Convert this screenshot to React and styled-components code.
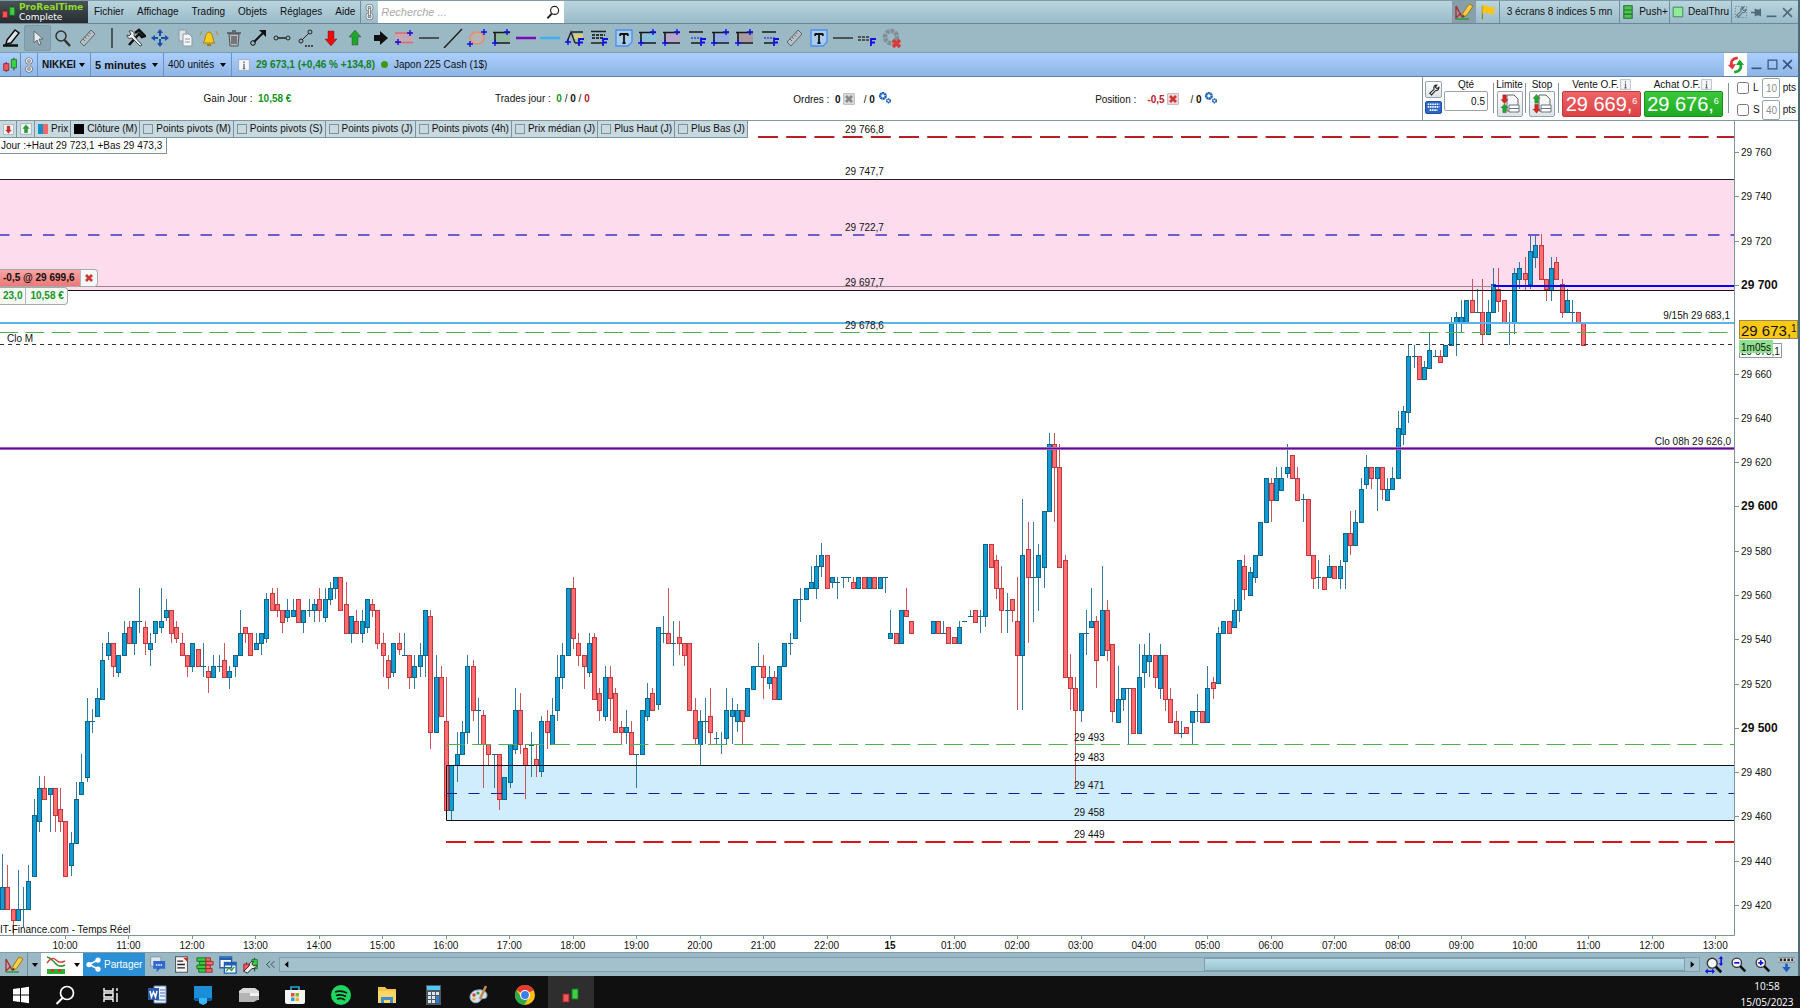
import React, { useState } from "react";
import styled, { createGlobalStyle } from "styled-components";

const GlobalStyle = createGlobalStyle`
  * { box-sizing: border-box; }
  body {
    margin: 0;
    background: #fff;
    font-family: "Liberation Sans", Arial, sans-serif;
    font-size: 10px;
    line-height: 12px;
    color: #111;
    overflow: hidden;
  }
  button, input { font: inherit; color: inherit; padding: 0; }
`;

const Window = styled.div`
  border-right: 2px solid #4d6a77;
`;

const Row = styled.div`
  display: flex;
  align-items: center;
`;

const Spacer = styled.div`
  flex: 1;
`;

const TopBar = styled(Row)`
  height: 24px;
  align-items: stretch;
  padding-right: 3px;
  border-top: 1px solid #7f9ba7;
  border-bottom: 1px solid #6d8894;
  background: linear-gradient(#b9d5df, #9bbbc9);
`;

const Brand = styled(Row)`
  width: 88px;
  gap: 2px;
  padding-left: 1px;
  background: linear-gradient(#4a5358, #262c30);
  color: #fff;
  font-family: "DejaVu Sans", sans-serif;
  font-size: 9px;
  line-height: 10px;

  strong {
    display: block;
    font-size: 9px;
    color: #8fdc2e;
  }
`;

const Menu = styled.nav`
  display: flex;
  align-items: center;
  gap: 13px;
  padding: 0 5px 0 6px;
`;

const FlatButton = styled.button`
  display: flex;
  align-items: center;
  justify-content: center;
  gap: 4px;
  border: none;
  background: ${(p) => p.$bg || "none"};
  width: ${(p) => (p.$w ? p.$w + "px" : "auto")};
  cursor: pointer;
  white-space: nowrap;
`;

const Divided = styled(FlatButton)`
  border-left: 1px solid #6f8e9b;
`;

const SearchBox = styled.label`
  display: flex;
  align-items: center;
  width: 186px;
  padding: 0 3px;
  background: #fff;

  input {
    flex: 1;
    min-width: 0;
    border: none;
    outline: none;
    font-size: 11px;
    font-style: italic;
  }
  input::placeholder { color: #aaa; }
`;

const Tools = styled.div`
  height: 29px;
  background: #9bb8c5;
  border-bottom: 1px solid #7c9dae;
`;

const ToolStrip = styled.div`
  display: flex;
  width: 904px;
  height: 28px;
`;

const Tool = styled.button`
  flex: 1;
  min-width: 0;
  display: flex;
  align-items: center;
  justify-content: center;
  border: ${(p) => (p.$active ? "1px solid #7d99a5" : "none")};
  border-radius: 2px;
  background: ${(p) => (p.$active ? "#8ba6b3" : "none")};
  margin: 1px 0;
  cursor: pointer;
`;

const TitleBar = styled(Row)`
  height: 24px;
  align-items: stretch;
  padding-right: 3px;
  background: linear-gradient(#abd0ff, #8fb5e4);
  border-bottom: 1px solid #5d83ad;
`;

const Picker = styled.button`
  display: flex;
  align-items: center;
  justify-content: space-between;
  width: ${(p) => p.$w}px;
  padding: 0 5px 0 4px;
  border: none;
  border-left: 1px solid #6f93bd;
  background: none;
  font-size: ${(p) => p.$size || 10}px;
  font-weight: ${(p) => (p.$bold ? "bold" : "normal")};
  white-space: nowrap;
`;

const Caret = styled.i`
  border: 3px solid transparent;
  border-top: 4px solid #000;
  border-bottom: 0;
`;

const Quote = styled(Row)`
  gap: 6px;
  padding-left: 6px;
  border-left: 1px solid #6f93bd;
`;

const Dot = styled.i`
  width: 7px;
  height: 7px;
  border-radius: 50%;
  background: #3f9a10;
`;

const Val = styled.b`
  color: ${(p) => p.$c || "#111"};
`;

const Account = styled(Row)`
  height: 44px;
  align-items: stretch;
  border-bottom: 1px solid #8296a0;
`;

const Stats = styled(Row)`
  flex: 1;
  justify-content: space-evenly;
`;

const Stat = styled.div`
  white-space: pre;
  svg { vertical-align: -2px; }
`;

const OrderPanel = styled(Row)`
  width: 376px;
  align-items: stretch;
  border-left: 1px solid #8296a0;
  padding-left: 2px;
`;

const Stack = styled.div`
  display: flex;
  flex-direction: column;
  align-items: center;
  width: ${(p) => p.$w}px;
  padding-top: ${(p) => p.$top || 1}px;
  gap: ${(p) => p.$gap || 0}px;
`;

const Rule = styled.i`
  width: 1px;
  height: 30px;
  margin: 6px 3px 0;
  background: #8296a0;
`;

const SquareButton = styled.button`
  display: flex;
  align-items: center;
  justify-content: center;
  width: ${(p) => p.$w}px;
  height: ${(p) => p.$h}px;
  border: 1px solid ${(p) => p.$border || "#98a4ab"};
  border-radius: 2px;
  background: ${(p) => p.$bg || "linear-gradient(#fff, #dfe3e6)"};
`;

const NumberInput = styled.input`
  width: ${(p) => p.$w}px;
  height: 20px;
  border: 1px solid #98a4ab;
  border-radius: 2px;
  text-align: right;
  padding-right: 2px;
  color: ${(p) => (p.$muted ? "#8a8f94" : "#111")};
`;

const Caption = styled.label`
  display: flex;
  align-items: center;
  gap: 1px;
  height: 13px;
  white-space: nowrap;
`;

const DealButton = styled.button`
  width: 79px;
  height: 26px;
  border: 1px solid ${(p) => p.$edge};
  border-radius: 2px;
  background: ${(p) => p.$bg};
  color: #fff;
  font-size: 20px;
  line-height: 24px;
  white-space: nowrap;

  sup {
    font-size: 9px;
    line-height: 9px;
    vertical-align: 7px;
  }
`;

const Limits = styled.div`
  flex: 1;
  padding-left: 5px;
`;

const LimitRow = styled.div`
  display: grid;
  grid-template-columns: 16px 9px 18px 1fr;
  align-items: center;
  height: 22px;
  white-space: nowrap;
  input[type="checkbox"] { width: 12px; height: 12px; margin: 0; }
`;

const ChartArea = styled.div`
  position: relative;
`;

const ChartSvg = styled.svg`
  display: block;
  width: 100%;
  height: auto;
  font-family: "Liberation Sans", Arial, sans-serif;
  font-size: 10px;
`;

const Overlay = styled.div`
  position: absolute;
  left: 0;
  top: ${(p) => p.$top};
`;

const Legend = styled(Row)`
  height: 17px;
  width: max-content;
  background: #c8d9e0;
  border-bottom: 1px solid #7a939f;
`;

const LegendItem = styled.label`
  display: flex;
  align-items: center;
  gap: 3px;
  height: 16px;
  padding: 0 2px 0 3px;
  border-right: 1px solid #7a939f;
  white-space: nowrap;

  input {
    appearance: none;
    width: 10px;
    height: 10px;
    margin: 0;
    border: 1px solid ${(p) => (p.$fill ? "transparent" : "#7f929c")};
    background: ${(p) => p.$fill || "#c8d9e0"} border-box;
  }
`;

const DayRange = styled.div`
  width: 167px;
  height: 16px;
  padding: 2px 1px 1px;
  background: #fff;
  border: 1px solid #7a939f;
  border-width: 0 1px 1px 0;
  white-space: nowrap;
`;

const Tag = styled(Row)`
  height: 18px;
  width: max-content;
  font-weight: bold;
  border: 1px solid #a9a9a9;
  border-left: none;
  border-radius: 0 4px 4px 0;
  background: #f6f7f7;
  color: #14961b;
`;

const TagPart = styled.span`
  height: 16px;
  padding: 2px ${(p) => (p.$sold ? 6 : 3)}px 0 3px;
  border-right: 1px solid #b7b7b7;
  color: ${(p) => (p.$sold ? "#111" : "inherit")};
  background: ${(p) => (p.$sold ? "linear-gradient(#f7a5a5, #ee7878)" : "none")};

  &:last-child { border-right: none; padding-left: 4px; }
`;

const BottomBar = styled(Row)`
  height: 24px;
  align-items: stretch;
  background: #9bb8c5;
  border-top: 1px solid #7c9dae;
`;

const Share = styled.button`
  display: flex;
  align-items: center;
  gap: 3px;
  width: 62px;
  padding-left: 3px;
  border: none;
  background: #2b90d6;
  color: #fff;
`;

const ScrollBar = styled.div`
  flex: 1;
  display: flex;
  align-items: stretch;
  margin: 4px 2px 4px 0;
  border: 1px solid #7f9eab;
  background: #a3c0cd;
`;

const Thumb = styled.div`
  width: 481px;
  border: 1px solid #7f9eab;
  background: linear-gradient(#b9dbe8, #9cc4d4);
`;

const Taskbar = styled.footer`
  display: flex;
  height: 32px;
  background: #101010;
  overflow: hidden;
`;

const Task = styled.button`
  width: 46px;
  height: 38px;
  display: flex;
  align-items: center;
  justify-content: center;
  border: none;
  background: ${(p) => (p.$active ? "#2e2e2e" : "none")};
  &:first-child { width: 42px; }
`;

const Clock = styled.time`
  width: 66px;
  padding-top: 2px;
  color: #fff;
  font-family: "Open Sans", "Noto Sans", sans-serif;
  font-size: 10px;
  line-height: 16px;
  text-align: center;
  white-space: nowrap;
`;

const Icon = ({ size = 20, children }) => (
  <svg width={size} height={size} viewBox="0 0 20 20" fill="none" aria-hidden="true">
    {children}
  </svg>
);

const Plus = ({ x, y }) => <path d={`M${x - 3} ${y}h6M${x} ${y - 3}v6`} stroke="#1010e0" strokeWidth="1.4" />;
const FMark = () => <path d="M14 18v-7h5M14 14.5h4" stroke="#1010e0" strokeWidth="1.8" />;

const Level = ({ color }) => (
  <>
    <path d="M2 5h16v10H2z" fill={color} />
    <path d="M1 4.500h17M3 15h15M3 5v10" stroke="#181818" strokeWidth="1.6" />
    <Plus x={15} y={4} />
    <Plus x={3} y={15} />
  </>
);

const FLines = () => (
  <>
    <path d="M2 4h14M4 15h9" stroke="#181818" strokeWidth="1.600" />
    <path d="M4 10h11" stroke="#1010e0" strokeDasharray="2 1" />
    <FMark />
  </>
);

const Candles = () => (
  <>
    <path d="M5 7v12M14 2v15" stroke="#222" />
    <path d="M2 9h6v8H2z" fill="#f0585c" stroke="#a02024" />
    <path d="M11 4h6v10h-6z" fill="#3fcf45" stroke="#157a1c" />
  </>
);

const Chain = () => (
  <g stroke="#555" strokeWidth="3">
    <rect x="7" y="2" width="6" height="6" rx="3" />
    <rect x="7" y="12" width="6" height="6" rx="3" />
    <g stroke="#f0f0f0" strokeWidth="1.600">
      <rect x="7" y="2" width="6" height="6" rx="3" />
      <rect x="7" y="12" width="6" height="6" rx="3" />
    </g>
    <path d="M10 6v8" stroke="#666" strokeWidth="2.800" />
    <path d="M10 6.500v7" stroke="#f4f4f4" strokeWidth="1.400" />
  </g>
);

const Magnifier = ({ color = "#222" }) => (
  <>
    <circle cx="12" cy="8" r="5" stroke={color} strokeWidth="1.500" />
    <path d="M8.500 12 3 18" stroke={color} strokeWidth="2.500" />
  </>
);

const ZoomGlass = ({ children }) => (
  <>
    <circle cx="8" cy="8" r="5.500" fill="#f4f6f8" stroke="#333" strokeWidth="1.500" />
    <path d="m12 12 6 6" stroke="#111" strokeWidth="3" />
    {children}
  </>
);

const Ruler = () => (
  <>
    <path d="m3 14 11-12 4 4L7 18z" fill="#b7bec4" stroke="#5d666c" />
    <path d="m6 11 2 2m0-4 1.500 1.500M10 6.500l2 2M12 4.500l1.500 1.500" stroke="#5d666c" />
  </>
);

const Note = () => (
  <>
    <path d="M2 2h16v12l-4 4H2z" fill="#a8ccea" stroke="#4d8df0" strokeWidth="1.300" />
    <path d="M6 6h8M10 6v9M8.500 15h3M6.200 5.500v2.500M13.800 5.500v2.500" stroke="#111" strokeWidth="1.800" />
  </>
);

const Wrench = ({ color = "#222" }) => (
  <path d="M4 14.500 10 9c-1-4 1-6 4-6l-2 3 2 2 3-2c0 4-3 5-5 5l-5.500 6z" stroke={color} strokeWidth="1.600" />
);

const Drawing = () => (
  <>
    <path d="m2 4 6 11M2 4v12l5-5" stroke="#b52828" strokeWidth="1.300" />
    <path d="M2 17h13" stroke="#2f9a35" strokeWidth="1.500" />
    <path d="m8 16 1-5 6-9 4 2-6 9z" fill="#f8cf4a" stroke="#a57812" />
    <path d="m8 16 1-3 2 1z" fill="#333" />
  </>
);

const Gears = () => (
  <g stroke="#2466b8">
    <circle cx="7" cy="7" r="4" strokeWidth="3.500" strokeDasharray="3 0.400" />
    <circle cx="15" cy="14" r="2.500" strokeWidth="2.500" strokeDasharray="2 0.400" />
  </g>
);

const Cross = ({ bg }) => (
  <>
    {bg && <path d="M1 1h18v18H1z" fill={bg} stroke="#999" />}
    <path d="m5 5 10 10M15 5 5 15" stroke={bg === "#ddd" ? "#888" : "#c93838"} strokeWidth="4.500" />
  </>
);

const Info = () => (
  <>
    <path d="M1 1h18v18H1z" fill="#f4f6f7" stroke="#8c979d" />
    <path d="M10 4v2.500M10 8v8M8 16h4" stroke="#667" strokeWidth="2.200" />
  </>
);

const Arrow = ({ color, down, x = 10, y = 10, k = 1 }) => (
  <g transform={`translate(${x} ${y}) scale(${k} ${down ? -k : k})`}>
    <path d="M0-8 6-1H3v8h-6v-8h-3z" fill={color} stroke="#333" strokeWidth=".400" />
  </g>
);

const OrderSheet = ({ flip }) => (
  <>
    <path d="M7 1h7l4 4v12H7z" fill="#f6f6f6" stroke="#666" />
    <path d="M9 11h10v7H9zM9 14.500h10" fill="#fff" stroke="#667780" />
    <Arrow x={4.500} y={5} k={0.600} down={!flip} color={flip ? "#1fa82b" : "#dd2222"} />
    <Arrow x={4.500} y={14.500} k={0.600} down={flip} color={flip ? "#dd2222" : "#1fa82b"} />
  </>
);

const tools = [
  ["Crayon", <><path d="m5 12 8-10 4 3-8 10-5 1z" fill="#dfe6ea" stroke="#111" strokeWidth="1.500" /><path d="M1 17.500h15" stroke="#111" strokeWidth="2.500" /></>],
  ["Curseur", <path d="M6 3v12l3-3 2 5 2-1-2-5h4z" fill="#e8ecee" stroke="#5e6a70" />, true],
  ["Zoom", <g transform="matrix(-1 0 0 1 20 0)"><Magnifier color="#333" /></g>],
  ["Règle", <Ruler />],
  null,
  ["Outils", <><path d="m3 17 9-10M9 5l4-3 6 6-3 1-4-4" stroke="#111" strokeWidth="2.500" /><path d="m16 17-8-9c1-4-2-6-5-5l2 3-2 2-2-1c0 3 2 4 5 3l8 8z" fill="#eee" stroke="#444" /></>],
  ["Déplacer", <><path d="M10 3v14M3 10h14" stroke="#1652a8" strokeWidth="2" strokeDasharray="5 3" /><path d="m10 1 3 4H7zM10 19l3-4H7zM1 10l4-3v6zM19 10l-4-3v6z" fill="#1652a8" /></>],
  ["Copier", <><path d="M4 2h7v11H4z" fill="#dfe5e8" stroke="#8d999f" /><path d="M8 6h6l3 3v9H8z" fill="#f4f6f7" stroke="#8d999f" /><path d="M10 11h5M10 14h5" stroke="#8d999f" /></>],
  ["Alarme", <><path d="M4 15c3-2 1-10 6-11 5 1 3 9 6 11z" fill="#f6cd1e" stroke="#a77d08" /><path d="M8 17h4" stroke="#a77d08" strokeWidth="2" /><path d="M3 3 1 7M17 3l2 4" stroke="#b98c10" /></>],
  ["Corbeille", <><path d="M5 6h10l-1 12H6z" fill="#b9bcbe" stroke="#4c5256" /><path d="M3 5h14M8 3h4M8 8v8M10 8v8M12 8v8" stroke="#4c5256" strokeWidth="1.300" /></>],
  ["Flèche", <><path d="M6 14 15 5" stroke="#111" strokeWidth="2" /><path d="M11 2h7v7z" fill="#111" /><circle cx="5" cy="15" r="2.300" stroke="#111" /></>],
  ["Segment", <><path d="M6 10h8" stroke="#222" strokeWidth="1.500" /><circle cx="4" cy="10" r="2" stroke="#222" /><circle cx="16" cy="10" r="2" stroke="#222" /></>],
  ["Demi-droite", <><path d="m5 12 7-7" stroke="#222" /><circle cx="4" cy="13" r="2" stroke="#222" /><circle cx="13" cy="4" r="2" stroke="#222" /><path d="M8 18h9" stroke="#222" strokeWidth="1.500" strokeDasharray="2 1" /></>],
  ["Baisse", <Arrow color="#f00808" down />],
  ["Hausse", <Arrow color="#1fa52c" />],
  ["Flèche droite", <path d="M4 7h6V3l8 7-8 7v-4H4z" fill="#111" />],
  ["Canal", <><path d="M1 5h18v9H1z" fill="#c3a9b5" /><path d="M1 5h18M1 14.500h18" stroke="#e2666c" strokeWidth="1.400" /><Plus x={16} y={5} /><Plus x={4} y={14} /></>],
  ["Horizontale", <path d="M0 10h20" stroke="#333" strokeWidth="1.500" />],
  ["Droite", <path d="M1 20 19 1" stroke="#222" strokeWidth="1.500" />],
  ["Ellipse", <><ellipse cx="10" cy="10" rx="7" ry="6" stroke="#ee8a66" strokeWidth="1.600" fill="#b9b4b4" /><Plus x={17} y={4} /><Plus x={3} y={16} /></>],
  ["Rectangle", <Level color="#8fb8a0" />],
  ["Ligne violette", <path d="M0 10h20" stroke="#7a0cb8" strokeWidth="2.500" />],
  ["Ligne bleue", <path d="M0 10h20" stroke="#3eb0f0" strokeWidth="2.500" />],
  ["Fourchette", <><path d="M9 6h9v5H9z" fill="#d8cf74" /><path d="M2 14 6 4l4 11M7 4h11M10 15h4" stroke="#222" strokeWidth="1.400" /><Plus x={3} y={14} /><FMark /></>],
  ["Fibonacci", <><path d="M2 3.500h15M2 15h11" stroke="#222" strokeWidth="1.500" /><path d="M3 7h13M3 10h11" stroke="#333" strokeWidth="2" strokeDasharray="3 1" /><FMark /></>],
  ["Texte", <Note />],
  ["Zone bleue", <Level color="#8cc0dc" />],
  ["Zone rose", <Level color="#b5a8cc" />],
  ["Niveaux 1", <FLines />],
  ["Zone bleu foncé", <Level color="#92aee0" />],
  ["Zone brune", <Level color="#a99ba6" />],
  ["Niveaux 2", <FLines />],
  ["Mesure", <Ruler />],
  ["Note", <Note />],
  ["Ligne", <path d="M0 10h20" stroke="#333" strokeWidth="1.500" />],
  ["Retracement", <><path d="M1 9h12M1 12h12" stroke="#333" strokeWidth="1.500" strokeDasharray="3 1" /><FMark /></>],
  ["Supprimer", <><circle cx="9" cy="9" r="6" stroke="#838e94" strokeWidth="4.500" strokeDasharray="3.500 1" /><path d="m11 12 7 7m0-7-7 7" stroke="#d93a3a" strokeWidth="3.500" /></>],
];

// Candles are consecutive 5 minute bars: kind (u up, d down), high, body top,
// body bottom, low. Values count thirds of a unit down from the segment's top.
const segments = [
  {
    slot: 0,
    top: 419,
    bars: `u942,1042,1106,1106 d974,1042,1106,1106 d1106,1106,1141,1184 u990,1106,1141,1141 u1041,1107,1107,1160
      u974,1024,1106,1106 u776,825,1009,1009 u708,743,842,877 d708,743,778,778 u743,743,761,877 d743,743,826,877
      d743,808,842,877 d842,842,1009,1009 u875,910,975,1009 u726,776,910,910 u641,726,761,761 u475,543,710,727
      u508,544,544,578 u443,475,527,527 u309,360,476,476 u277,310,344,361 d310,310,377,412 u344,344,395,412
      u244,279,344,344 d244,262,310,310 u244,244,310,344 u143,244,244,279 d244,262,310,344 u279,310,327,378
      u244,244,279,310 u143,244,262,279 u177,210,230,244 d210,210,279,310 d244,262,293,310 d279,310,344,344
      d344,344,377,412 u310,310,377,395 d326,326,377,377 u310,377,377,412 d377,394,412,460 u344,377,412,412
      u344,377,377,395 d310,360,412,412 u377,394,412,446 u344,344,377,412 u210,279,344,344 d262,262,279,310
      d279,279,344,344 u279,310,327,327 u279,279,310,344 u160,177,293,310 d143,160,211,211 d143,193,211,230
      d211,211,245,279 u177,211,230,245 u177,211,228,228 d177,177,245,245 u211,211,245,279 u177,211,211,230
      u177,193,211,245 d143,177,211,245 u143,177,230,245 u126,143,178,194 u112,112,143,177 d112,112,211,211
      d126,193,279,279 u228,228,279,310 d211,244,279,279 u211,244,279,310 u178,178,262,279 d178,193,211,230
      d211,211,310,327 d279,310,344,412 d344,360,412,446 u310,310,395,412 d279,310,327,344 u279,344,344,344
      d344,344,412,446 u344,377,412,446 u310,344,377,412 u211,211,344,412 d211,228,577,626 u344,412,577,577
      d377,412,527,527 d412,544,809,809 u676,676,809,842 u577,642,676,727 u544,577,642,642 u344,377,577,612
      d360,377,510,544 u475,510,510,612 d510,526,612,744 d612,612,642,676 u642,642,642,744 d642,642,778,809
      u710,710,778,778 u612,612,727,744 u444,510,626,642 d458,510,612,642 d612,625,676,778 u577,615,615,710
      d612,658,676,710 u527,544,694,710 d510,544,577,626 u475,526,612,612 u344,412,510,544 u310,344,412,446
      u143,143,344,344 d112,143,293,327 d279,310,344,378 d344,344,377,446 u279,310,395,412 d279,292,476,476
      d444,460,510,544 u377,412,527,544 d377,412,475,544 d444,460,577,577 d544,560,577,612 u510,560,577,612
      d544,577,642,642 u642,642,642,744 u510,510,642,642 u428,475,527,544 d444,460,510,510 u262,262,493,510
      u228,279,279,310 d143,279,310,310 u244,310,310,378 d244,292,310,344 d310,310,344,378 d310,310,510,510
      d475,510,595,612 u510,544,612,676 u475,544,544,612 d444,527,577,612 u577,595,595,612 u577,612,612,642
      u444,510,595,612 u475,510,527,612 u492,510,544,577 d510,510,544,612 u444,444,527,527 u377,377,446,446
      u310,377,377,377 d344,377,412,476 u377,412,430,446 d394,412,476,476 u377,377,476,476 u310,310,377,377
      u279,310,310,344 u178,178,293,293 u143,178,178,246 u143,143,178,178 u78,126,143,143 u44,78,143,178
      u10,44,78,112 d44,44,143,143 u112,112,127,143 u112,127,127,178 u112,112,112,143 u112,112,112,127
      d112,126,143,143 u112,112,143,143 d112,112,143,143 u112,112,143,143 d112,112,143,143 u112,112,143,143
      u112,112,112,160 u210,279,293,293 d279,279,310,310 u211,211,310,310 d143,211,229,229 d244,244,279,279`,
  },
  {
    slot: 176,
    top: 299,
    bars: `u604,604,640,640 d604,604,640,640 u604,640,640,640 d622,622,670,670 d652,652,670,670 u604,622,670,670
      u604,604,604,604 u571,589,589,589 d571,571,605,605 u571,589,589,640 u371,371,589,622 d371,371,440,440
      d404,421,505,538 d438,503,571,640 u520,571,571,640 d538,538,571,605 d472,604,704,871 u238,404,704,871
      d306,388,472,670 u306,472,472,605 u371,404,472,572 u272,272,440,504 u38,72,272,272 d38,72,140,307
      d72,140,440,440 d404,421,772,772 d702,772,805,871 d771,805,871,1100 u640,640,871,905 u571,640,640,704
      u503,604,622,622 d587,604,721,805 u438,571,704,704 d540,571,690,724 d672,672,872,905 u737,838,905,905
      u805,805,838,872 u805,805,805,972 d805,805,938,938 u672,771,938,938 u672,706,755,805 u638,706,724,772
      d706,706,772,805 u672,706,805,838 d706,706,838,872 d805,838,905,905 d872,904,938,938 u904,938,938,955
      d920,920,938,938 u872,872,905,972 u821,872,872,905 d872,872,905,905 u737,805,905,905 d771,787,805,838
      u622,640,788,788 u604,604,640,640 d604,604,640,640 u538,571,622,622 u421,421,571,605 d404,438,507,540
      u440,456,524,524 u404,404,472,490 u306,306,405,405 u174,174,307,307 d174,190,240,307 u140,174,240,240
      u140,174,209,209 u72,140,158,174 d106,106,174,174 d140,174,240,240 u223,238,238,307 d238,238,405,405
      d405,405,473,507 u421,472,472,507 d472,472,507,507 u404,438,472,472`,
  },
  {
    slot: 252,
    top: 99,
    bars: `d1039,1039,1073,1073 u1020,1039,1073,1107 u940,940,1022,1107 d872,940,975,1005 u871,906,975,975
      u774,808,907,907 u706,740,792,808 d740,740,775,808 u740,740,775,873 d740,740,808,840 u774,808,840,840
      u740,774,808,808 u574,625,774,774 u557,574,642,674 u376,408,575,608 u376,408,408,443 d408,408,476,476
      u424,442,476,476 u340,390,443,443 u390,408,408,408 d390,408,426,426 u374,374,408,408 u292,308,374,374
      u275,292,308,408 u241,292,308,340 u241,241,307,307 d177,241,277,277 u208,275,275,275 d177,275,341,375
      u241,275,341,341 u143,191,276,276 d143,208,242,276 d241,241,307,307 u275,308,308,375 u143,160,307,341
      u126,143,178,208 d110,160,178,210 u42,93,191,208 u42,76,110,143 d42,76,178,178 d178,178,208,242
      u110,143,210,242 d110,126,178,178 d177,191,276,293 u208,241,276,276 u241,276,276,305 d276,276,307,307
      d308,308,375,375`,
  },
];

const candles = segments.flatMap(({ slot, top, bars }) =>
  bars.trim().split(/\s+/).map((bar, i) => {
    const [high, open, close, low] = bar.slice(1).split(",").map((v) => Math.round(top + v / 3));
    return { x: Math.round(2 + (slot + i) * 5.287), up: bar[0] === "u", high, open, close, low };
  })
);

const Candle = ({ x, up, high, open, close, low }) => {
  const line = up ? "#0f658c" : "#c2383d";
  return (
    <g shapeRendering="crispEdges">
      <path d={`M${x + 0.5} ${high}V${low}`} stroke={line} opacity=".850" />
      {open === close ? (
        <path d={`M${x - 2} ${open + 0.5}h5`} stroke={line} />
      ) : (
        <rect x={x - 1.5} y={open + 0.5} width="4" height={close - open} fill={up ? "#109cd2" : "#fa6d70"} stroke={line} />
      )}
    </g>
  );
};

const PLOT = 1734;
const priceY = (p) => 164 + (700 - p) * 2.214;
const prices = Array.from({ length: 18 }, (_, i) => 760 - i * 20).filter((p) => p !== 680);
const hours = Array.from({ length: 27 }, (_, i) => {
  if (i === 13) return "15";
  const h = i < 13 ? 10 + i : i - 13;
  return String(h).padStart(2, "0") + ":00";
});

const HLine = ({ y, from = 0, color, width = 1, dash, offset }) => (
  <path d={`M${from} ${y}H${PLOT}`} stroke={color} strokeWidth={width} strokeDasharray={dash} strokeDashoffset={offset} />
);

const labels = [
  [845, 12, "29 766,8"], [845, 54, "29 747,7"], [845, 110, "29 722,7"], [845, 165, "29 697,7"], [845, 208, "29 678,6"],
  [1074, 620, "29 493"], [1074, 640, "29 483"], [1074, 668, "29 471"], [1074, 695, "29 458"], [1074, 717, "29 449"],
  [7, 221, "Clo M"], [0, 812, "IT-Finance.com - Temps Réel"],
];

const Chart = () => (
  <ChartSvg viewBox="0 0 1798 831" fill="none" role="img" aria-label="NIKKEI 5 minutes">
    <rect y="58" width={PLOT} height="111" fill="#fddcee" />
    <rect x="446" y="644" width={PLOT - 446} height="56" fill="#cfedfd" />
    {candles.map((c) => <Candle key={c.x} {...c} />)}
    <HLine y={16} from={758} color="#b92024" width={2} dash="20 8.200" />
    <HLine y={58.5} color="#222" />
    <HLine y={114} color="#6a5fc8" width={2} dash="11.500 11" offset="2" />
    <HLine y={165.5} color="#9a8490" />
    <HLine y={169.5} color="#111" />
    <HLine y={165} from={1493} color="#0404ec" width={2} />
    <HLine y={202} color="#5ab4e6" width={2} />
    <HLine y={211.5} color="#4fb04f" dash="19 7.300" offset="1" />
    <HLine y={223.5} color="#333" dash="4 4" />
    <HLine y={327.5} color="#a060c4" width={3} />
    <HLine y={327.5} color="#650a92" />
    <HLine y={623.5} from={446} color="#4fb04f" dash="19 7.200" />
    <path d={`M${PLOT} 644.500H446.500V699.500H${PLOT}`} stroke="#111" />
    <HLine y={672.5} from={446} color="#1a1aa0" dash="11 11.500" />
    <HLine y={721} from={446} color="#dc1416" width={2} dash="20 8.200" />

    <g fill="#111">
      {labels.map(([x, y, text]) => <text key={text} x={x} y={y}>{text}</text>)}
      <text x="1730" y="198" textAnchor="end">9/15h 29 683,1</text>
      <text x="1731" y="324" textAnchor="end">Clo 08h 29 626,0</text>
    </g>

    <path d={`M0 814.500H${PLOT}.5V0`} stroke="#7d939d" />
    {prices.map((p) => (
      <g key={p}>
        <path d={`M1735 ${Math.round(priceY(p))}.5h4`} stroke="#7d939d" />
        <text
          x="1741"
          y={Math.round(priceY(p)) + 4}
          fill="#111"
          fontWeight={p % 100 ? "normal" : "bold"}
          fontSize={p % 100 ? 10 : 12}
        >
          29 {p}
        </text>
      </g>
    ))}
    {hours.map((h, i) => {
      const x = 65 + i * 63.47;
      return (
        <g key={i}>
          <path d={`M${Math.round(x)}.5 815v3`} stroke="#7d939d" />
          <text x={x} y="828" textAnchor="middle" fill="#111" fontWeight={h === "15" ? "bold" : "normal"}>{h}</text>
        </g>
      );
    })}

    <rect x="1739.500" y="222.500" width="42" height="14" fill="#fff" stroke="#8a99a3" />
    <text x="1741" y="234" fill="#111">29 673,1</text>
    <rect x="1739" y="219" width="34" height="13" fill="#8fe08f" />
    <text x="1741" y="230" fill="#111">1m05s</text>
    <rect x="1739.500" y="199.500" width="58" height="18" fill="#fbc914" stroke="#9a8a50" />
    <text x="1741" y="215" fontSize="15" fill="#111">29 673,</text>
    <text x="1791" y="211" fontSize="10" fill="#111">1</text>
  </ChartSvg>
);

const indicators = [
  ["Prix", "linear-gradient(90deg, #1093c8 50%, #f5666a 50%)"],
  ["Clôture (M)", "#000"],
  ["Points pivots (M)"],
  ["Points pivots (S)"],
  ["Points pivots (J)"],
  ["Points pivots (4h)"],
  ["Prix médian (J)"],
  ["Plus Haut (J)"],
  ["Plus Bas (J)"],
];

const taskIcons = [
  ["Démarrer", <path d="m2 4 7-1v6.500H2zM10 2.900l8-1.200v7.800h-8zM2 10.500h7V17l-7-1zM10 10.500h8v7.800L10 17.100z" fill="#fff" />],
  ["Rechercher", <><circle cx="12" cy="8" r="6.500" stroke="#fff" strokeWidth="1.700" /><path d="m7.500 13-6 6" stroke="#fff" strokeWidth="2" /></>],
  ["Vue des tâches", <path d="M3 3v3h9V3M3 17v-3h9v3M3 8h9v4H3zM16 3v3m0 2v9" stroke="#fff" strokeWidth="1.400" />],
  ["Word", <><path d="M7 1h12v17H7z" fill="#eef3fb" stroke="#6487bd" /><path d="M13 5h5M13 8h5M13 11h5M9 15h9" stroke="#3c6db8" /><path d="M1 3h11v12H1z" fill="#2a5caa" /><path d="m3 6 1.500 6L6.500 7l2 5L10 6" stroke="#fff" strokeWidth="1.500" /></>],
  ["Ordinateur", <><path d="M1 1h18v14H1z" fill="#1c8ed8" /><path d="M0 13h20l-2 3H2z" fill="#0c5c9c" /><path d="M6 13h8v5l-4 2-4-2z" fill="#38b6f4" /></>],
  ["Imprimante", <><path d="M0 6 4 3h12l4 3v9H0z" fill="#d9d9d9" /><path d="M0 8h20v6l-5 3H0z" fill="#b4b4b4" /><path d="M11 8h9v3h-9z" fill="#f2f2f2" /></>],
  ["Store", <><path d="M6 5V2h8v3" stroke="#29a3e0" strokeWidth="1.700" /><path d="M0 5h20v12q0 2-2 2H2q-2 0-2-2z" fill="#f4f4f4" /><path d="M6 8h3.500v3.500H6z" fill="#e8502a" /><path d="M10.500 8H14v3.500h-3.500z" fill="#7ab82c" /><path d="M6 12.500h3.500V16H6z" fill="#2a9ce0" /><path d="M10.500 12.500H14V16h-3.500z" fill="#f6b61e" /></>],
  ["Spotify", <><circle cx="10" cy="10" r="10" fill="#1ed760" /><path d="M4 7q6-2 12 1M5 10.500q5-1.500 10 1M6 14q4-1.500 8 1" stroke="#111" strokeWidth="1.800" /></>],
  ["Explorateur", <><path d="M1 2h7l2 2h9v14H1z" fill="#f6c344" /><path d="M1 6h18v12H1z" fill="#fcd667" /><path d="M4 18v-6h12v6h-3v-3H7v3z" fill="#3d8fd6" /></>],
  ["Calculatrice", <><path d="M3 0h15v20H3z" fill="#4c5a66" /><path d="M4 1h13v4H4z" fill="#53c7f0" /><path d="M5 7h3v3H5zM9 7h3v3H9zM13 7h3v3h-3zM5 11h3v3H5zM9 11h3v3H9zM5 15h3v3H5zM9 15h3v3H9z" fill="#dfe6ea" /><path d="M13 11h3v7h-3z" fill="#2c7cd0" /></>],
  ["Paint", <><path d="M9 5c7-1 11 4 8 8-3 1-5 0-6 3-4 4-10 1-10-4 0-4 4-7 8-7z" fill="#cfe0ef" stroke="#8aa6c0" /><circle cx="5" cy="10" r="1.700" fill="#e03c31" /><circle cx="9" cy="8" r="1.600" fill="#3a9b3c" /><circle cx="5" cy="14" r="1.600" fill="#e8b51e" /><path d="m11 14 6-13" stroke="#c8864a" strokeWidth="2.500" /></>],
  ["Chrome", <><circle cx="10" cy="10" r="10" fill="#fbc116" /><path d="M10 10 1.300 5A10 10 0 0 1 18.700 5z" fill="#e33b2e" /><path d="M1.300 5a10 10 0 0 0 8 15L14 12l-8 0z" fill="#2da94f" /><circle cx="10" cy="10" r="5" fill="#fff" /><circle cx="10" cy="10" r="3.900" fill="#3b7de9" /></>],
];

export default function App() {
  const [shown, setShown] = useState({ Prix: true, "Clôture (M)": true });
  const toggle = (name) => setShown((s) => ({ ...s, [name]: !s[name] }));

  return (
    <>
      <GlobalStyle />
      <Window>
        <TopBar as="header">
          <Brand>
            <Icon size={16}><Candles /></Icon>
            <span><strong>ProRealTime</strong>Complete</span>
          </Brand>
          <Menu>
            {["Fichier", "Affichage", "Trading", "Objets", "Réglages", "Aide"].map((m) => <FlatButton key={m}>{m}</FlatButton>)}
          </Menu>
          <Divided $w={18} aria-label="Lier"><Icon><Chain /></Icon></Divided>
          <SearchBox>
            <input type="search" placeholder="Recherche ..." aria-label="Recherche" />
            <Icon size={16}><Magnifier /></Icon>
          </SearchBox>
          <Spacer />
          <FlatButton $w={24} $bg="#869fab" aria-label="Dessin"><Icon><Drawing /></Icon></FlatButton>
          <FlatButton $w={23} aria-label="Drapeau">
            <Icon size={16}><path d="M3 2v17" stroke="#a07a20" strokeWidth="1.500" /><path d="M3 2q4-1 7 1t8 0v9q-5 2-8 0t-7 0z" fill="#fcc419" /></Icon>
          </FlatButton>
          <Divided $w={120}>3 écrans 8 indices 5 mn</Divided>
          <Divided $w={50}>
            <Icon size={14}><path d="M4 1h12v18H4zM4 7h12M4 13h12" fill="#49c84c" stroke="#2b6a38" strokeWidth="1.500" /></Icon>Push+
          </Divided>
          <Divided $w={62}>
            <Icon size={12}><path d="M2 2h16v16H2z" fill="#90ea98" stroke="#3f7d58" strokeWidth="1.500" /></Icon>DealThru
          </Divided>
          <Divided $w={18} aria-label="Options"><Icon size={14}><path d="M2 2h16v16H2z" stroke="#5b7480" strokeDasharray="2 2" /><Wrench color="#5b7480" /></Icon></Divided>
          <FlatButton $w={15} aria-label="Épingler"><Icon size={11}><path d="M0 10h8M8 3v14M8 6h8v8H8M17 3v14" stroke="#4f6a77" strokeWidth="2.500" fill="#4f6a77" /></Icon></FlatButton>
          <FlatButton $w={15} aria-label="Réduire"><Icon size={11}><path d="M1 17h18" stroke="#4f6a77" strokeWidth="3" /></Icon></FlatButton>
          <FlatButton $w={16} aria-label="Fermer"><Icon size={11}><path d="m2 2 16 16M18 2 2 18" stroke="#4f6a77" strokeWidth="2.800" /></Icon></FlatButton>
        </TopBar>

        <Tools>
          <ToolStrip role="toolbar">
            {tools.map((t, i) =>
              t ? (
                <Tool key={i} $active={t[2]} aria-label={t[0]}><Icon>{t[1]}</Icon></Tool>
              ) : (
                <Tool key={i} as="span"><Icon><path d="M10 0v20" stroke="#222" strokeWidth="1.300" /></Icon></Tool>
              )
            )}
          </ToolStrip>
        </Tools>

        <TitleBar>
          <FlatButton $w={20} aria-label="Graphique"><Icon size={17}><Candles /></Icon></FlatButton>
          <Divided $w={17} aria-label="Lier"><Icon><Chain /></Icon></Divided>
          <Picker $w={53} $bold>NIKKEI<Caret /></Picker>
          <Picker $w={73} $bold $size={11}>5 minutes<Caret /></Picker>
          <Picker $w={68}>400 unités<Caret /></Picker>
          <Quote>
            <Icon size={12}><Info /></Icon>
            <Val $c="#12821a">29 673,1 (+0,46 % +134,8)</Val>
            <Dot />
            <span>Japon 225 Cash (1$)</span>
          </Quote>
          <Spacer />
          <FlatButton $w={23} $bg="#fff" aria-label="Actualiser">
            <Icon size={18}>
              <path d="M12 2Q3 3 5 12" stroke="#e0383c" strokeWidth="3" /><path d="m1 10 9-1-4 6z" fill="#e0383c" />
              <path d="M8 18q9-1 7-10" stroke="#1fa52c" strokeWidth="3" /><path d="m10 10 9 0-5-6z" fill="#1fa52c" />
            </Icon>
          </FlatButton>
          <FlatButton $w={18} aria-label="Réduire"><Icon size={11}><path d="M1 17h18" stroke="#31557f" strokeWidth="3" /></Icon></FlatButton>
          <FlatButton $w={14} aria-label="Agrandir"><Icon size={11}><path d="M2 2h16v16H2z" stroke="#31557f" strokeWidth="2.200" /></Icon></FlatButton>
          <FlatButton $w={16} aria-label="Fermer"><Icon size={11}><path d="m2 2 16 16M18 2 2 18" stroke="#31557f" strokeWidth="2.800" /></Icon></FlatButton>
        </TitleBar>

        <Account>
          <Stats>
            <Stat>Gain Jour :  <Val $c="#14961b">10,58 €</Val></Stat>
            <Stat>Trades jour :  <Val $c="#14961b">0</Val> / <b>0</b> / <Val $c="#b8202a">0</Val></Stat>
            <Stat>{"Ordres :  "}<b>0</b> <Icon size={12}><Cross bg="#ddd" /></Icon>{"   / "}<b>0</b> <Icon size={14}><Gears /></Icon></Stat>
            <Stat>{"Position :    "}<Val $c="#b8202a">-0,5</Val> <Icon size={12}><Cross bg="#f6dada" /></Icon>{"    / "}<b>0</b> <Icon size={14}><Gears /></Icon></Stat>
          </Stats>
          <OrderPanel>
            <Stack $w={17} $top={4} $gap={3}>
              <SquareButton $w={17} $h={17} aria-label="Réglages"><Icon size={14}><Wrench /></Icon></SquareButton>
              <SquareButton $w={17} $h={13} $bg="#2c66c4" $border="#1f4f9e" aria-label="Clavier">
                <Icon size={13}><path d="M1 5h18M1 9h18M4 14h12" stroke="#fff" strokeWidth="2.500" strokeDasharray="2.500 1" /></Icon>
              </SquareButton>
            </Stack>
            <Stack $w={48}>
              <Caption htmlFor="qty">Qté</Caption>
              <NumberInput id="qty" $w={44} defaultValue="0.5" />
            </Stack>
            <Rule />
            <Stack $w={25}>
              <Caption>Limite</Caption>
              <SquareButton $w={26} $h={26} aria-label="Limite"><Icon><OrderSheet /></Icon></SquareButton>
            </Stack>
            <Rule />
            <Stack $w={26}>
              <Caption>Stop</Caption>
              <SquareButton $w={26} $h={26} aria-label="Stop"><Icon><OrderSheet flip /></Icon></SquareButton>
            </Stack>
            <Rule />
            <Stack $w={79}>
              <Caption>Vente O.F.<Icon size={11}><Info /></Icon></Caption>
              <DealButton $bg="linear-gradient(#ee6464, #dc4146)" $edge="#c5363a">29 669,<sup>6</sup></DealButton>
            </Stack>
            <Stack $w={84}>
              <Caption>Achat O.F.<Icon size={11}><Info /></Icon></Caption>
              <DealButton $bg="linear-gradient(#3bc83c, #1eaa22)" $edge="#178f1b">29 676,<sup>6</sup></DealButton>
            </Stack>
            <Rule />
            <Limits>
              {[["L", "10"], ["S", "40"]].map(([side, points]) => (
                <LimitRow key={side}>
                  <input type="checkbox" id={"limit" + side} />
                  <label htmlFor={"limit" + side}>{side}</label>
                  <NumberInput $w={18} $muted defaultValue={points} aria-label={side + " pts"} />
                  <span>&nbsp;pts</span>
                </LimitRow>
              ))}
            </Limits>
          </OrderPanel>
        </Account>

        <ChartArea>
          <Chart />
          <Overlay $top="0">
            <Legend>
              <LegendItem as="span"><Icon size={11}><path d="M1 1h18v18H1z" fill="#f2f5f6" stroke="#8a99a3" /><Arrow color="#dc2a2a" down k={0.9} /></Icon></LegendItem>
              <LegendItem as="span"><Icon size={12}><path d="M1 1h18v18H1z" fill="#f2f5f6" stroke="#8a99a3" /><Arrow color="#1fa52c" k={0.9} /></Icon></LegendItem>
              {indicators.map(([name, fill]) => (
                <LegendItem key={name} $fill={fill}>
                  <input type="checkbox" checked={!!shown[name]} onChange={() => toggle(name)} />
                  {name}
                </LegendItem>
              ))}
            </Legend>
            <DayRange>Jour :+Haut 29 723,1 +Bas 29 473,3</DayRange>
          </Overlay>
          <Overlay $top="17.800%">
            <Tag>
              <TagPart $sold>-0,5 @ 29 699,6</TagPart>
              <FlatButton $w={16} aria-label="Clôturer"><Icon size={12}><Cross /></Icon></FlatButton>
            </Tag>
            <Tag>
              <TagPart>23,0</TagPart>
              <TagPart>10,58 €</TagPart>
            </Tag>
          </Overlay>
        </ChartArea>

        <BottomBar>
          <FlatButton $w={27} aria-label="Dessin"><Icon><Drawing /></Icon></FlatButton>
          <Divided $w={14} aria-label="Plus"><Caret /></Divided>
          <FlatButton $w={29} $bg="#fff" aria-label="Indicateurs">
            <Icon><path d="M1 2q4 1 8 6t10 2" stroke="#2f9a35" strokeWidth="1.500" /><path d="M1 8q5-7 9-3t9 1" stroke="#d04444" strokeWidth="1.500" /><path d="M1 14h18v5H1z" fill="#26b52e" /><path d="M5 14h3v3H5zM12 14h3v3h-3z" fill="#d33" /></Icon>
          </FlatButton>
          <FlatButton $w={13} $bg="#fff" aria-label="Plus"><Caret /></FlatButton>
          <Share>
            <Icon size={15}><path d="M16 4 4 10l12 6" stroke="#fff" strokeWidth="2" /><circle cx="16" cy="4" r="3.500" fill="#fff" /><circle cx="4" cy="10" r="3.500" fill="#fff" /><circle cx="16" cy="16" r="3.500" fill="#fff" /></Icon>
            Partager
          </Share>
          <FlatButton $w={25} aria-label="Messages">
            <Icon size={17}><path d="M2 1h12v11H2z" fill="#dce6ea" stroke="#7a8f99" /><path d="M5 6h14v9h-6l-4 4v-4H5z" fill="#2f68d0" /><path d="M8 10.500h8" stroke="#fff" strokeWidth="1.800" strokeDasharray="1.800 1" /></Icon>
          </FlatButton>
          <FlatButton $w={23} aria-label="Liste">
            <Icon size={17}><path d="M3 1h14v18H3z" fill="#f5f5f5" stroke="#555" strokeWidth="1.200" /><path d="M5 6h7M5 10h9M5 14h9" stroke="#222" strokeWidth="1.600" /><path d="M12 2h5v5z" fill="#d22" /></Icon>
          </FlatButton>
          <FlatButton $w={23} aria-label="Carnet">
            <Icon size={18}><path d="M1 2h10v4H1zM4 6h7v4H4zM1 10h10v4H1zM3 14h8v4H3z" fill="#3ccb42" stroke="#16701e" /><path d="M11 2h5v4h-5zM11 6h8v4h-8zM11 10h5v4h-5zM11 14h7v4h-7z" fill="#f06a6e" stroke="#9c2a2e" /></Icon>
          </FlatButton>
          <FlatButton $w={24} aria-label="Fenêtres">
            <Icon size={18}><path d="M1 1h13v12H1zM6 7h13v12H6z" fill="#fff" stroke="#2460b0" strokeWidth="1.500" /><path d="M1 3h13M6 9h13" stroke="#2460b0" strokeWidth="3" /><path d="m8 17 3-4 3 3 3-4" stroke="#2f9a35" strokeWidth="1.500" /></Icon>
          </FlatButton>
          <FlatButton $w={22} aria-label="Configurer">
            <Icon size={18}><Candles /><path d="M2 17 8 11q0-5 5-5l-2 3 2 2 3-1q0 4-5 4l-5 5z" fill="#eee" stroke="#222" /></Icon>
          </FlatButton>
          <FlatButton $w={17} aria-label="Replier"><Icon size={11}><path d="m9 4-6 6 6 6M17 4l-6 6 6 6" stroke="#344b57" strokeWidth="1.800" /></Icon></FlatButton>
          <ScrollBar>
            <FlatButton $w={13} aria-label="Gauche"><Icon size={9}><path d="M14 3v14L6 10z" fill="#000" /></Icon></FlatButton>
            <Spacer />
            <Thumb />
            <FlatButton $w={14} aria-label="Droite"><Icon size={9}><path d="M6 3v14l8-7z" fill="#000" /></Icon></FlatButton>
          </ScrollBar>
          <FlatButton $w={24} aria-label="Ajuster"><Icon size={18}><ZoomGlass /><path d="M1 17h9M18 1v8" stroke="#1010e0" strokeWidth="1.800" /><path d="m3 14-3 3 3 3zM8 14l3 3-3 3zM15 3l3-3 2 3zM15 8l3 3 2-3z" fill="#1010e0" /></Icon></FlatButton>
          <FlatButton $w={24} aria-label="Zoom arrière"><Icon size={17}><ZoomGlass><path d="M5 8h6" stroke="#1010e0" strokeWidth="2" /></ZoomGlass></Icon></FlatButton>
          <FlatButton $w={24} aria-label="Zoom avant"><Icon size={17}><ZoomGlass><path d="M5 8h6M8 5v6" stroke="#1010e0" strokeWidth="2" /></ZoomGlass></Icon></FlatButton>
          <FlatButton $w={24} aria-label="Détacher"><Icon size={17}><path d="M0 2h20v5H0z" fill="#f4f4f4" stroke="#777" /><path d="M2 4.500h16" stroke="#222" strokeWidth="3" strokeDasharray="3 1.500" /><path d="M10 9v5" stroke="#1f5fc0" strokeWidth="3" /><path d="M5 13h10l-5 6z" fill="#1f5fc0" /></Icon></FlatButton>
        </BottomBar>
      </Window>

      <Taskbar>
        {taskIcons.map(([name, art]) => <Task key={name} aria-label={name}><Icon>{art}</Icon></Task>)}
        <Task $active aria-label="ProRealTime"><Icon><Candles /></Icon></Task>
        <Spacer />
        <Clock>10:58<br />15/05/2023</Clock>
      </Taskbar>
    </>
  );
}
